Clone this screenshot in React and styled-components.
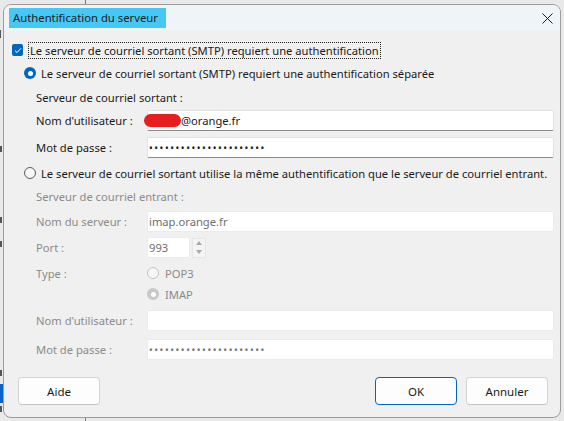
import React from 'react';
import styled, { createGlobalStyle } from 'styled-components';

const Global = createGlobalStyle`
  html, body { margin: 0; padding: 0; }
  body {
    width: 564px; height: 421px; overflow: hidden;
    background: #e9e9e9;
    font-family: "Noto Sans", "Open Sans", sans-serif;
  }
`;

const Desktop = styled.div`
  position: relative;
  width: 564px; height: 421px;
  box-sizing: border-box;
  padding: 4px 3px 3px 3px;
  display: flex;
  background: #e9e9e9;
  overflow: hidden;
`;

const BackLine = styled.div`
  position: absolute;
  left: 85px; width: 1px;
  top: ${p => p.$top}px; height: ${p => p.$h}px;
  background: #7a7a7a;
`;

const BackMark = styled.div`
  position: absolute;
  left: 0; width: ${p => p.$w || 2}px;
  top: ${p => p.$top}px; height: ${p => p.$h || 6}px;
  background: ${p => p.$c || '#555'};
`;

const Dialog = styled.div`
  position: relative;
  flex: 1;
  display: flex; flex-direction: column;
  border: 1px solid #9c9c9c;
  border-radius: 8px;
  overflow: hidden;
  background: #f0f0f0;
`;

const TitleBar = styled.div`
  height: 26px; flex: none;
  display: flex; align-items: center; justify-content: space-between;
  padding: 0 7px 0 5px;
  background: #eef4f8;
`;

const TitleText = styled.span`
  background: #47c8f4;
  color: #1b1b1b;
  height: 20px; line-height: 20px;
  padding: 0 8px 0 4px;
  font-size: 11.3px;
`;

const CloseButton = styled.div`
  width: 12px; height: 12px;
  display: flex; align-items: center; justify-content: center;
`;

const Body = styled.div`
  flex: 1;
  display: flex; flex-direction: column;
  padding: 0 6px 12px 8px;
  font-size: 11.2px;
  color: #1a1a1a;
`;

const Row = styled.div`
  display: flex; align-items: center;
  height: ${p => p.$h || 18}px;
  margin-top: ${p => p.$mt || 0}px;
  margin-left: ${p => p.$indent || 0}px;
  gap: ${p => p.$gap ?? 5}px;
  color: ${p => (p.$disabled ? '#8b8b8b' : '#1a1a1a')};
  white-space: nowrap;
`;

const Field = styled.div`
  display: grid;
  grid-template-columns: 111px 1fr;
  align-items: center;
  height: ${p => p.$h || 21}px;
  margin-top: ${p => p.$mt || 0}px;
  margin-left: 24px;
  color: ${p => (p.$disabled ? '#8b8b8b' : '#1a1a1a')};
  white-space: nowrap;
`;

const Checkbox = styled.div`
  width: 11px; height: 12px;
  box-sizing: border-box;
  border-radius: 2px;
  background: #0067c0;
  display: flex; align-items: center; justify-content: center;
`;

const FocusLabel = styled.span`
  border: 1px dotted #222;
  padding: 0 1px;
  line-height: 15px;
`;

const Radio = styled.div`
  width: 12px; height: 12px;
  box-sizing: border-box;
  border-radius: 50%;
  flex: none;
  display: flex; align-items: center; justify-content: center;
  ${p => p.$checked && !p.$disabled && `
    background: #0067c0;
    &::after { content: ''; width: 5px; height: 5px; border-radius: 50%; background: #fff; }
  `}
  ${p => !p.$checked && !p.$disabled && `
    border: 1px solid #5a5a5a;
    background: #f7f7f7;
  `}
  ${p => p.$checked && p.$disabled && `
    background: #c8c8c8;
    &::after { content: ''; width: 5px; height: 5px; border-radius: 50%; background: #fff; }
  `}
  ${p => !p.$checked && p.$disabled && `
    border: 1px solid #c4c4c4;
    background: #f6f6f6;
  `}
`;

const InputBox = styled.div`
  height: 21px;
  box-sizing: border-box;
  width: ${p => (p.$w ? `${p.$w}px` : 'auto')};
  background: #fff;
  border: 1px solid ${p => (p.$disabled ? '#ebebeb' : '#e3e3e3')};
  border-bottom-color: ${p => (p.$disabled ? '#ebebeb' : '#8a8a8a')};
  border-radius: 2px;
  display: flex; align-items: center;
  padding-left: 1px;
  color: ${p => (p.$disabled ? '#6e6e6e' : '#1a1a1a')};
  white-space: nowrap;
  overflow: visible;
`;

const Redaction = styled.span`
  display: inline-block;
  width: 37px; height: 13px;
  margin-left: -5px;
  border-radius: 7px;
  background: #e61e1e;
`;

const Dots = styled.span`
  font-size: 10px;
  letter-spacing: 1.55px;
  color: ${p => (p.$disabled ? '#777' : '#1a1a1a')};
`;

const SpinWrap = styled.div`
  display: flex; align-items: center; gap: 2px;
`;

const Spinner = styled.div`
  width: 14px; height: 20px;
  box-sizing: border-box;
  border: 1px solid #e6e6e6;
  background: #f4f4f4;
  display: flex; flex-direction: column;
  align-items: center; justify-content: space-around;
`;

const ButtonRow = styled.div`
  display: flex; align-items: center;
  height: 28px;
  margin-top: 17px;
  padding: 0 6px;
  gap: 9px;
`;

const Spacer = styled.div` flex: 1; `;

const Button = styled.div`
  width: 82px; height: 28px;
  box-sizing: border-box;
  border: 1px solid ${p => (p.$primary ? '#0067c0' : '#d3d3d3')};
  border-bottom-color: ${p => (p.$primary ? '#0067c0' : '#c4c4c4')};
  border-radius: 4px;
  background: #fdfdfd;
  display: flex; align-items: center; justify-content: center;
  font-size: 11.5px;
  color: #1a1a1a;
`;

export default function App() {
  return (
    <>
      <Global />
      <Desktop>
        <BackLine $top={0} $h={5} />
        <BackLine $top={417} $h={4} />
        <BackMark $top={30} $h={8} $w={1} />
        <BackMark $top={146} $h={6} />
        <BackMark $top={217} $h={6} />
        <BackMark $top={241} $h={6} />
        <BackMark $top={370} $h={6} />
        <BackMark $top={384} $h={19} $w={4} $c="#0a64c8" />
        <BackMark $top={406} $h={6} />
        <Dialog>
          <TitleBar>
            <TitleText>Authentification du serveur</TitleText>
            <CloseButton>
              <svg width="11" height="11" viewBox="0 0 11 11">
                <path d="M0.5 0.5 L10.5 10.5 M10.5 0.5 L0.5 10.5" stroke="#1a1a1a" strokeWidth="1" />
              </svg>
            </CloseButton>
          </TitleBar>
          <Body>
            <Row $mt={10} $gap={5}>
              <Checkbox>
                <svg width="8" height="7" viewBox="0 0 8 7">
                  <path d="M1 3.6 L3 5.5 L7 1.3" stroke="#fff" strokeWidth="1" fill="none" />
                </svg>
              </Checkbox>
              <FocusLabel>Le serveur de courriel sortant (SMTP) requiert une authentification</FocusLabel>
            </Row>
            <Row $mt={5} $indent={12}>
              <Radio $checked />
              <span>Le serveur de courriel sortant (SMTP) requiert une authentification séparée</span>
            </Row>
            <Row $mt={6} $indent={24}>Serveur de courriel sortant :</Row>
            <Field $mt={4}>
              <span>Nom d'utilisateur :</span>
              <InputBox>
                <Redaction />
                <span>@orange.fr</span>
              </InputBox>
            </Field>
            <Field $mt={6}>
              <span>Mot de passe :</span>
              <InputBox>
                <Dots>••••••••••••••••••••••</Dots>
              </InputBox>
            </Field>
            <Row $mt={6} $indent={12}>
              <Radio />
              <span>Le serveur de courriel sortant utilise la même authentification que le serveur de courriel entrant.</span>
            </Row>
            <Row $mt={5} $indent={24} $disabled>Serveur de courriel entrant :</Row>
            <Field $mt={6} $disabled>
              <span>Nom du serveur :</span>
              <InputBox $disabled>imap.orange.fr</InputBox>
            </Field>
            <Field $mt={5} $disabled>
              <span>Port :</span>
              <SpinWrap>
                <InputBox $disabled $w={43}>993</InputBox>
                <Spinner>
                  <svg width="6" height="4" viewBox="0 0 6 4"><path d="M0 4 L3 0 L6 4 Z" fill="#a8a8a8" /></svg>
                  <svg width="6" height="4" viewBox="0 0 6 4"><path d="M0 0 L3 4 L6 0 Z" fill="#a8a8a8" /></svg>
                </Spinner>
              </SpinWrap>
            </Field>
            <Field $mt={6} $h={18} $disabled>
              <span>Type :</span>
              <Row $gap={6} $disabled>
                <Radio $disabled />
                <span>POP3</span>
              </Row>
            </Field>
            <Field $mt={3} $h={18} $disabled>
              <span />
              <Row $gap={6} $disabled>
                <Radio $disabled $checked />
                <span>IMAP</span>
              </Row>
            </Field>
            <Field $mt={7} $disabled>
              <span>Nom d'utilisateur :</span>
              <InputBox $disabled />
            </Field>
            <Field $mt={8} $disabled>
              <span>Mot de passe :</span>
              <InputBox $disabled>
                <Dots $disabled>••••••••••••••••••••••</Dots>
              </InputBox>
            </Field>
            <ButtonRow>
              <Button>Aide</Button>
              <Spacer />
              <Button $primary>OK</Button>
              <Button>Annuler</Button>
            </ButtonRow>
          </Body>
        </Dialog>
      </Desktop>
    </>
  );
}
